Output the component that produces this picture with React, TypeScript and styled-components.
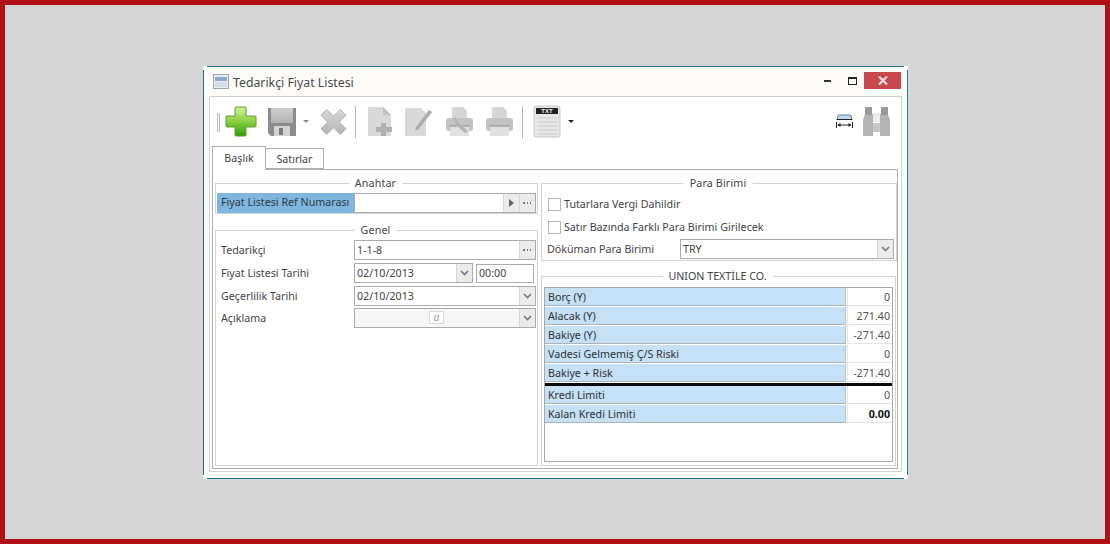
import React from "react";
import styled, { createGlobalStyle } from "styled-components";

const Global = createGlobalStyle`
  html, body { margin: 0; padding: 0; height: 100%; }
  #root { height: 100%; }
  * { box-sizing: border-box; }
  body { font-family: "Noto Sans", "Liberation Sans", sans-serif; font-size: 10.7px; color: #333; }
`;

const Page = styled.div`
  width: 1110px; height: 544px; background: #d6d6d6; border: 5px solid #b01116;
  display: flex; align-items: center; justify-content: center;
`;
const Win = styled.div`
  position: relative; width: 705px; height: 413px; display: flex; flex-direction: column; background: #fcfdfb;
  border: 1px solid #24708a; border-right-color: #1f7fb5; padding: 0 5px 6px 5px; margin-left: 1px; margin-top: 1px;
`;
const Notch = styled.div<{ $top?: boolean; $left?: boolean }>`
  position: absolute; width: 4px; height: 4px; background: #fafdfd;
  ${(p) => (p.$top ? "top: -1px;" : "bottom: -1px;")}
  ${(p) => (p.$left ? "left: -1px;" : "right: -1px;")}
`;
const TitleBar = styled.div`
  height: 29px; flex: none; display: flex; align-items: center; background: #fdfbf7; margin: 0 -5px; padding: 0 6px 0 9px;
`;
const Title = styled.span`
  font-size: 12.3px; color: #4a4a4a; margin-left: 4px; flex: 1; padding-top: 1px;
`;
const WinBtn = styled.div`
  width: 25px; height: 17px; display: flex; align-items: center; justify-content: center; margin-top: -2px;
`;
const CloseBtn = styled(WinBtn)`
  width: 37px; background: #c9484d; margin-left: -1px;
`;
const Body = styled.div`
  flex: 1; display: flex; flex-direction: column; background: #fff; border: 1px solid #d2d2d2; padding-right: 3px;
`;
const Toolbar = styled.div`
  height: 49px; flex: none; display: flex; align-items: center; padding-left: 7px; padding-right: 8px;
`;
const Grip = styled.div`
  width: 3px; height: 19px; border-left: 1px solid #b8b8b8; border-right: 1px solid #b8b8b8; margin-right: 5px; margin-top: 1px;
`;
const Sep = styled.div<{ $r: number }>`
  width: 1px; height: 32px; background: #b5b5b5; margin: 0 ${(p) => p.$r}px 0 8px;
`;
const Caret = styled.div<{ $dark?: boolean }>`
  width: 0; height: 0; border-left: 3px solid transparent; border-right: 3px solid transparent;
  border-top: 3px solid ${(p) => (p.$dark ? "#222" : "#888")}; margin: 0 ${(p) => (p.$dark ? 0 : "11px")} 0 ${(p) => (p.$dark ? "7px" : "6px")};
`;
const Spacer = styled.div`flex: 1;`;
const ToolGap = styled.div<{ $w: number }>`width: ${(p) => p.$w}px; flex: none;`;
const Tabs = styled.div`
  height: 23px; flex: none; display: flex; align-items: flex-end; margin-left: 2px; position: relative; z-index: 1;
`;
const Tab = styled.div<{ $active?: boolean }>`
  border: 1px solid #b0b0b0; background: #fff; color: #444;
  height: ${(p) => (p.$active ? "24px" : "21px")}; width: ${(p) => (p.$active ? "54px" : "58px")};
  margin-bottom: ${(p) => (p.$active ? "-1px" : "0")}; border-bottom: ${(p) => (p.$active ? "none" : "1px solid #b0b0b0")};
  ${(p) => (p.$active ? "" : "border-left: none;")}
  display: flex; align-items: center; justify-content: center; padding-bottom: ${(p) => (p.$active ? "1px" : "0")};
`;
const TabPanel = styled.div`
  flex: 1; margin-left: 2px; margin-bottom: 2px; border: 1px solid #b0b0b0; padding: 13px 2px 2px 2px;
  display: grid; grid-template-columns: 323px 356px; column-gap: 3px;
`;
const Col = styled.div<{ $gap: number }>`
  display: flex; flex-direction: column; gap: ${(p) => p.$gap}px; min-height: 0;
`;
const Group = styled.div<{ $grow?: boolean; $h?: number; $mr?: number }>`
  position: relative; border: 1px solid #d4d4d4; padding: 9px 1px 1px; display: flex; flex-direction: column;
  ${(p) => (p.$grow ? "flex: 1;" : `height: ${p.$h}px; flex: none;`)}
  margin-right: ${(p) => p.$mr ?? 0}px;
`;
const Legend = styled.span<{ $narrow?: boolean }>`
  position: absolute; top: -9px; left: calc(50% - 1px); transform: translateX(-50%); background: #fff; padding: 0 6px;
  line-height: 16px; color: #444; white-space: nowrap; letter-spacing: ${(p) => (p.$narrow ? 0 : "0.15px")};
`;
const Row = styled.div<{ $tight?: boolean }>`
  display: flex; align-items: center; flex: none; height: 20px; margin-bottom: 3px; margin-top: ${(p) => (p.$tight ? "-1px" : "0")};
`;
const RowLabel = styled.div`
  width: 137px; padding-left: 4px; padding-bottom: 1px; color: #444; flex: none;
`;
const KeyLabel = styled.div`
  width: 137px; height: 20px; background: #7fb6de; padding-left: 4px; line-height: 19px; color: #2d3a44; flex: none; white-space: nowrap;
`;
const Field = styled.div<{ $disabled?: boolean; $w?: number }>`
  ${(p) => (p.$w ? `width: ${p.$w}px; flex: none;` : "flex: 1;")} height: 20px; border: 1px solid #ababab;
  background: ${(p) => (p.$disabled ? "#f7f7f7" : "#fff")}; display: flex; align-items: center; position: relative; min-width: 0;
`;
const FieldText = styled.span`
  flex: 1; padding-left: 2px; padding-bottom: 1px; color: #444;
`;
const Btn = styled.div`
  width: 16px; height: 18px; flex: none; background: #ebebeb; border-left: 1px solid #d6d6d6;
  display: flex; align-items: center; justify-content: center; color: #666;
`;
const Dots = styled.span`
  display: block; width: 9px; height: 2px;
  background: repeating-linear-gradient(90deg, #777 0 1.5px, transparent 1.5px 3.5px);
`;
const TimeField = styled(Field)`margin-left: 3px; width: 58px; flex: none; height: 19px;`;
const ACenter = styled.div`
  position: absolute; left: 74px; top: 2px; width: 15px; height: 13px; border: 1px solid #d8d8d8; background: #fff;
  font-family: "Liberation Serif", serif; font-style: italic; font-size: 12px; color: #999; line-height: 10px; text-align: center;
`;
const CheckRow = styled.div`
  display: flex; align-items: center; height: 14px; flex: none; margin: 4px 0 5px 5px; color: #444;
`;
const Box = styled.div`
  width: 13px; height: 13px; border: 1px solid #b4b4b4; background: #fff; margin-right: 3px; flex: none;
`;
const CurrencyRow = styled.div`
  display: flex; align-items: center; flex: none; height: 20px; padding-left: 4px; padding-right: 1px; color: #444;
`;
const CurrencyLabel = styled.div`width: 133px; flex: none; padding-bottom: 1px;`;
const Table = styled.div`
  flex: 1; margin: 1px 1px 2px; border: 1px solid #a9a9a9;
  display: flex; flex-direction: column;
`;
const TRow = styled.div`
  height: 19px; display: flex; flex: none;
`;
const TLabel = styled.div`
  width: 301px; height: 18px; background: #c6e0f5; border-bottom: 1px solid #a9b4bd; border-right: 1px solid #b5c0c8;
  padding-left: 3px; line-height: 18px; color: #2c3238; flex: none;
`;
const TValue = styled.div<{ $bold?: boolean }>`
  flex: 1; height: 18px; margin-left: 1px; text-align: right; padding-right: 2px; line-height: 19px; color: ${(p) => (p.$bold ? "#111" : "#555")};
  font-weight: ${(p) => (p.$bold ? 700 : 400)}; border-bottom: 1px solid #e4e4e4; border-left: 1px solid #e4e4e4;
`;
const Rule = styled.div`
  height: 3px; background: #0a0a0a; flex: none;
`;

const GrayDefs = () => (
  <defs>
    <filter id="soft" x="-10%" y="-10%" width="120%" height="120%"><feGaussianBlur stdDeviation="0.6" /></filter>
    <linearGradient id="gr" x1="0" y1="0" x2="0" y2="1"><stop offset="0" stopColor="#d8d8d8" /><stop offset="1" stopColor="#b4b4b4" /></linearGradient>
    <linearGradient id="gn" x1="0" y1="0" x2="0" y2="1"><stop offset="0" stopColor="#d2f0a0" /><stop offset="0.5" stopColor="#8ccf3f" /><stop offset="1" stopColor="#2f9c14" /></linearGradient>
    <linearGradient id="sv" x1="0" y1="0" x2="0" y2="1"><stop offset="0" stopColor="#cfcfcf" /><stop offset="1" stopColor="#b2b2b2" /></linearGradient>
  </defs>
);

const PlusIcon = () => (
  <svg width="32" height="31" viewBox="0 0 32 31"><GrayDefs />
    <path d="M11 1h9a1 1 0 0 1 1 1v8h9a1 1 0 0 1 1 1v9a1 1 0 0 1-1 1h-9v8a1 1 0 0 1-1 1h-9a1 1 0 0 1-1-1v-8H2a1 1 0 0 1-1-1v-9a1 1 0 0 1 1-1h8V2a1 1 0 0 1 1-1z" fill="url(#gn)" stroke="#5f9f2e" strokeWidth="1" filter="url(#soft)" />
  </svg>
);
const SaveIcon = () => (
  <svg width="30" height="31" viewBox="0 0 30 31">
    <g filter="url(#soft)">
      <path d="M1 2h28v28H4l-3-3z" fill="#8c8c8c" />
      <rect x="4" y="2" width="22" height="15" fill="url(#sv)" />
      <rect x="7" y="20" width="16" height="10" fill="#d4d4d4" />
      <rect x="12" y="22" width="4" height="7" fill="#7b7b7b" />
    </g>
  </svg>
);
const XIcon = () => (
  <svg width="27" height="28" viewBox="0 0 28 28">
    <path d="M7 1l7 7 7-7 6 6-7 7 7 7-6 6-7-7-7 7-6-6 7-7-7-7z" fill="url(#gr)" stroke="#b0b0b0" filter="url(#soft)" />
  </svg>
);
const DocPlusIcon = () => (
  <svg width="27" height="31" viewBox="0 0 27 31">
    <g filter="url(#soft)">
      <path d="M1 1h15l8 8v21H1z" fill="#d9d9d9" />
      <path d="M16 1l8 8h-8z" fill="#c2c2c2" />
      <path d="M14 17h5v4h6v5h-6v4h-5v-4H9v-5h5z" fill="#b0b0b0" />
    </g>
  </svg>
);
const DocPenIcon = () => (
  <svg width="30" height="31" viewBox="0 0 30 31">
    <g filter="url(#soft)">
      <path d="M1 2h16l5 5v23H1z" fill="#d9d9d9" />
      <path d="M12 21L25 4l3 2-13 17-4 2z" fill="#adadad" />
    </g>
  </svg>
);
const PrinterIcon = ({ spark }: { spark?: boolean }) => (
  <svg width="29" height="31" viewBox="0 0 29 31">
    <g filter="url(#soft)">
      <path d="M7 1h11l4 4v10H7z" fill="#d6d6d6" />
      <rect x="1" y="12" width="27" height="13" rx="3" fill="#c4c4c4" />
      <rect x="5" y="21" width="19" height="9" fill="#e0e0e0" />
      <rect x="4" y="19" width="21" height="1.5" fill="#a9a9a9" />
      {spark && <path d="M9 10l5 7 9 8-3 2-9-8z" fill="#b2b2b2" />}
    </g>
  </svg>
);
const TxtIcon = () => (
  <svg width="28" height="33" viewBox="0 0 28 33">
    <g filter="url(#soft)">
      <rect x="1" y="1" width="26" height="31" rx="2" fill="#e6e6e6" stroke="#c8c8c8" />
      <g stroke="#cfcfcf"><path d="M4 13h20M4 17h20M4 21h20M4 25h20M4 29h20" /></g>
    </g>
    <rect x="3" y="3" width="22" height="6" fill="#222" />
    <text x="14" y="8.4" fontSize="6" fontWeight="700" fill="#eee" textAnchor="middle" fontFamily="Liberation Sans, sans-serif">TXT</text>
  </svg>
);
const FitIcon = () => (
  <svg width="17" height="15" viewBox="0 0 17 15">
    <path d="M1.5 5.5V3a2 2 0 0 1 2-2h10a2 2 0 0 1 2 2v2.5z" fill="#bcd8f3" stroke="#6b7d90" />
    <path d="M0.5 5.5h16" stroke="#222" />
    <path d="M0.5 8v6M16.5 8v6M2 11h13" stroke="#222" fill="none" />
    <path d="M1.5 11l3-2v4zM15.5 11l-3-2v4z" fill="#222" />
  </svg>
);
const BinocIcon = () => (
  <svg width="27" height="31" viewBox="0 0 27 31">
    <g filter="url(#soft)" fill="#b4b4b4">
      <path d="M2 8h8v22H0V14z" />
      <path d="M25 8h-8v22h10V14z" />
      <rect x="2" y="1" width="7" height="8" fill="#9a9a9a" />
      <rect x="18" y="1" width="7" height="8" fill="#9a9a9a" />
      <rect x="10" y="17" width="7" height="9" fill="#c8c8c8" />
      <rect x="10" y="7" width="7" height="9" fill="#ececec" />
    </g>
  </svg>
);
const WindowGlyph = () => (
  <svg width="16" height="15" viewBox="0 0 16 15">
    <rect x="0.5" y="0.5" width="15" height="14" fill="#e8edf3" stroke="#9aa7b5" />
    <rect x="2" y="3" width="12" height="4" fill="#8aa9cb" />
    <rect x="2" y="8" width="12" height="5" fill="#d5dde6" />
  </svg>
);
const Chevron = () => (
  <svg width="9" height="6" viewBox="0 0 9 6"><path d="M1 1l3.5 3.5L8 1" stroke="#777" strokeWidth="1.6" fill="none" /></svg>
);
const PlayGlyph = () => (
  <svg width="5" height="8" viewBox="0 0 5 8"><path d="M0 0l5 4-5 4z" fill="#666" /></svg>
);

const figures = [
  ["Borç (Y)", "0"],
  ["Alacak (Y)", "271.40"],
  ["Bakiye (Y)", "-271.40"],
  ["Vadesi Gelmemiş Ç/S Riski", "0"],
  ["Bakiye + Risk", "-271.40"],
];

export default function App() {
  return (
    <>
      <Global />
      <Page>
        <Win>
          <Notch $top $left />
          <Notch $top />
          <Notch $left />
          <Notch />
          <TitleBar>
            <WindowGlyph />
            <Title>Tedarikçi Fiyat Listesi</Title>
            <WinBtn>
              <svg width="8" height="4" viewBox="0 0 8 4"><rect y="1" width="7" height="2" fill="#333" /></svg>
            </WinBtn>
            <WinBtn>
              <svg width="10" height="8" viewBox="0 0 10 8"><rect x="0.5" y="0.5" width="8" height="7" fill="none" stroke="#222" /><rect x="0.5" y="0.5" width="8" height="1.5" fill="#222" /></svg>
            </WinBtn>
            <CloseBtn>
              <svg width="10" height="9" viewBox="0 0 10 9"><path d="M1 0.5l8 8M9 0.5l-8 8" stroke="#fbeaea" strokeWidth="2" /></svg>
            </CloseBtn>
          </TitleBar>
          <Body>
            <Toolbar>
              <Grip />
              <PlusIcon />
              <ToolGap $w={10} />
              <SaveIcon />
              <Caret />
              <XIcon />
              <Sep $r={11} />
              <DocPlusIcon />
              <ToolGap $w={10} />
              <DocPenIcon />
              <ToolGap $w={11} />
              <PrinterIcon spark />
              <ToolGap $w={11} />
              <PrinterIcon />
              <Sep $r={10} />
              <TxtIcon />
              <Caret $dark />
              <Spacer />
              <FitIcon />
              <ToolGap $w={10} />
              <BinocIcon />
            </Toolbar>
            <Tabs>
              <Tab $active>Başlık</Tab>
              <Tab>Satırlar</Tab>
            </Tabs>
            <TabPanel>
              <Col $gap={16}>
                <Group $h={31}>
                  <Legend>Anahtar</Legend>
                  <Row>
                    <KeyLabel>Fiyat Listesi Ref Numarası</KeyLabel>
                    <Field>
                      <FieldText />
                      <Btn><PlayGlyph /></Btn>
                      <Btn><Dots /></Btn>
                    </Field>
                  </Row>
                </Group>
                <Group $grow>
                  <Legend>Genel</Legend>
                  <Row>
                    <RowLabel>Tedarikçi</RowLabel>
                    <Field><FieldText>1-1-8</FieldText><Btn><Dots /></Btn></Field>
                  </Row>
                  <Row>
                    <RowLabel>Fiyat Listesi Tarihi</RowLabel>
                    <Field $w={119}><FieldText>02/10/2013</FieldText><Btn><Chevron /></Btn></Field>
                    <TimeField><FieldText>00:00</FieldText></TimeField>
                  </Row>
                  <Row>
                    <RowLabel>Geçerlilik Tarihi</RowLabel>
                    <Field><FieldText>02/10/2013</FieldText><Btn><Chevron /></Btn></Field>
                  </Row>
                  <Row $tight>
                    <RowLabel>Açıklama</RowLabel>
                    <Field $disabled><FieldText /><ACenter>a</ACenter><Btn><Chevron /></Btn></Field>
                  </Row>
                </Group>
              </Col>
              <Col $gap={15}>
                <Group $h={78}>
                  <Legend>Para Birimi</Legend>
                  <CheckRow><Box />Tutarlara Vergi Dahildir</CheckRow>
                  <CheckRow><Box />Satır Bazında Farklı Para Birimi Girilecek</CheckRow>
                  <CurrencyRow>
                    <CurrencyLabel>Döküman Para Birimi</CurrencyLabel>
                    <Field><FieldText>TRY</FieldText><Btn><Chevron /></Btn></Field>
                  </CurrencyRow>
                </Group>
                <Group $grow $mr={1}>
                  <Legend $narrow>UNION TEXTİLE CO.</Legend>
                  <Table>
                    {figures.map(([l, v]) => (
                      <TRow key={l}><TLabel>{l}</TLabel><TValue>{v}</TValue></TRow>
                    ))}
                    <Rule />
                    <TRow><TLabel>Kredi Limiti</TLabel><TValue>0</TValue></TRow>
                    <TRow><TLabel>Kalan Kredi Limiti</TLabel><TValue $bold>0.00</TValue></TRow>
                  </Table>
                </Group>
              </Col>
            </TabPanel>
          </Body>
        </Win>
      </Page>
    </>
  );
}
